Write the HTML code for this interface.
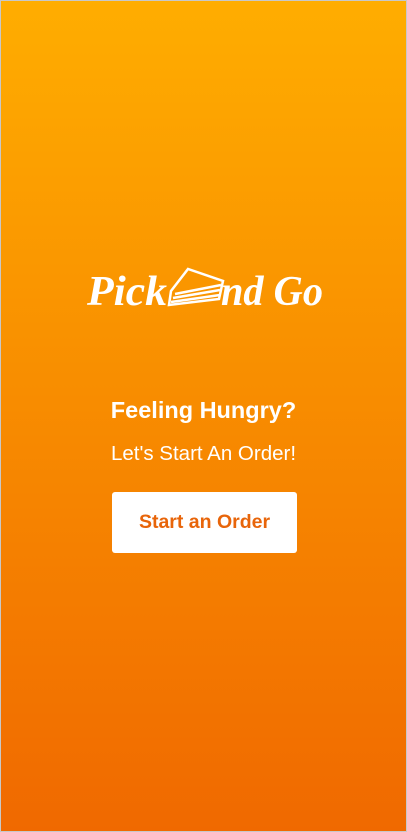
<!DOCTYPE html>
<html><head><style>
html,body{margin:0;padding:0}
body{width:407px;height:832px;overflow:hidden;font-family:"Liberation Sans",sans-serif}
.bg{position:absolute;left:0;top:0;width:405px;height:830px;border:1px solid #c8c8c8;background:linear-gradient(#ffad00,#f06900)}
.logo{position:absolute;left:84px;top:258px;width:240px;height:66px;overflow:visible}
.h{position:absolute;top:396px;left:0;width:405px;text-align:center;color:#fff;font-weight:bold;font-size:23.5px}
.s{position:absolute;top:441px;left:0;width:405px;text-align:center;color:#fff;font-size:20.5px}
.btn{position:absolute;left:111px;top:491px;width:185px;height:61px;background:#fff;border-radius:3px;color:#e8650a;font-weight:bold;font-size:19.5px;text-align:center;line-height:61px}
</style></head><body>
<div class="bg">
<svg class="logo" viewBox="0 0 240 66">
<text x="2" y="46" font-family="Liberation Serif" font-style="italic" font-weight="bold" font-size="42" fill="#fff" textLength="80" lengthAdjust="spacingAndGlyphs">Pick</text>
<g fill="none" stroke="#fff" stroke-width="2.5">
<path d="M86 32 L103 10 L138 22 L134 40 L84 46 Z"/>
<path d="M90 35 L136 26 M88 39 L135 31 M86 43 L135 36"/>
</g>
<text x="136" y="46" font-family="Liberation Serif" font-style="italic" font-weight="bold" font-size="42" fill="#fff" textLength="102" lengthAdjust="spacingAndGlyphs">nd Go</text>
</svg>
<div class="h">Feeling Hungry?</div>
<div class="s">Let's Start An Order!</div>
<div class="btn">Start an Order</div>
</div>
</body></html>
